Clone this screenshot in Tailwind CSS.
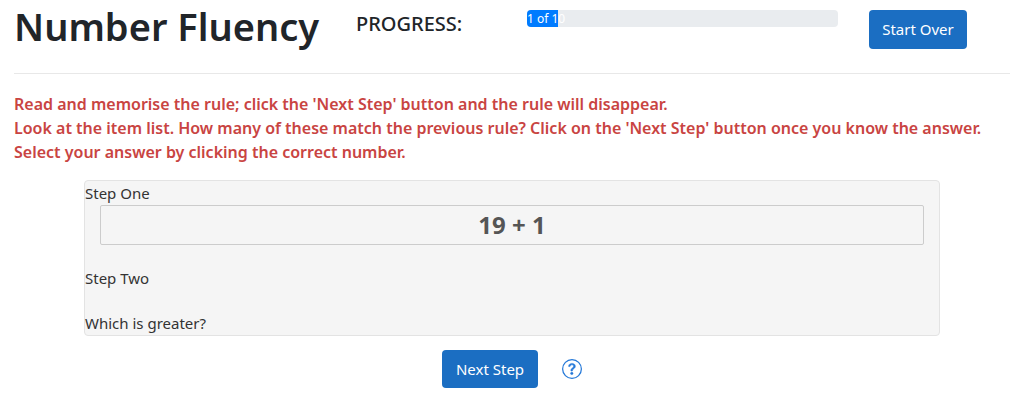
<!DOCTYPE html>
<html lang="en">
<head>
<meta charset="utf-8">
<title>Number Fluency</title>
<script src="https://cdn.jsdelivr.net/npm/@tailwindcss/browser@4"></script>
</head>
<body class="bg-white font-['Noto_Sans',sans-serif] text-base text-[#212529]">
<header class="mx-3.5 flex h-[74px] items-start border-b border-[#e8e8e8]">
  <h1 class="w-[342px] shrink-0 whitespace-nowrap text-[38px] leading-[52px] font-semibold">Number Fluency</h1>
  <h2 id="progress-label" class="w-[171px] shrink-0 pt-2.5 text-xl leading-7 font-medium">PROGRESS:</h2>
  <div role="progressbar" aria-labelledby="progress-label" aria-valuenow="1" aria-valuemin="0" aria-valuemax="10" class="mt-2.5 h-[17px] grow overflow-hidden rounded bg-[#e9ecef]">
    <div class="flex h-full w-1/10 items-center bg-[#007bff] text-xs whitespace-nowrap text-white">1 of 10</div>
  </div>
  <button class="mt-2.5 mr-[43px] ml-[31px] h-[39px] w-[98px] shrink-0 rounded bg-[#1b6ec2] text-[15px] text-white">Start Over</button>
</header>
<main>
  <p class="mx-3.5 mt-[18px] text-base leading-6 font-semibold text-[#c94442]">Read and memorise the rule; click the 'Next Step' button and the rule will disappear.<br>Look at the item list. How many of these match the previous rule? Click on the 'Next Step' button once you know the answer.<br>Select your answer by clicking the correct number.</p>
  <section class="mx-[84px] mt-4 rounded border border-[#e3e3e3] bg-[#f5f5f5] text-[#333]">
    <p class="text-[15px] leading-6">Step One</p>
    <div class="mx-[15px] h-10 rounded-xs border border-[#ccc] text-center text-2xl leading-[38px] font-bold text-[#555]">19 + 1</div>
    <p class="mt-[21px] text-[15px] leading-6">Step Two</p>
    <p class="mt-[21px] text-[15px] leading-6">Which is greater?</p>
  </section>
  <div class="mt-3.5 flex items-center justify-center gap-6">
    <button class="h-[38px] w-24 rounded bg-[#1b6ec2] text-[15px] text-white">Next Step</button>
    <button aria-label="Help" class="text-[#2478d8]"><svg class="size-5" viewBox="0 0 16 16" fill="currentColor"><path d="M8 15A7 7 0 1 1 8 1a7 7 0 0 1 0 14m0 1A8 8 0 1 0 8 0a8 8 0 0 0 0 16"/><path stroke="currentColor" stroke-width=".4" d="M5.255 5.786a.237.237 0 0 0 .241.247h.825c.138 0 .248-.113.266-.25.09-.656.54-1.134 1.342-1.134.686 0 1.314.343 1.314 1.168 0 .635-.374.927-.965 1.371-.673.489-1.206 1.06-1.168 1.987l.003.217a.25.25 0 0 0 .25.246h.811a.25.25 0 0 0 .25-.25v-.105c0-.718.273-.927 1.01-1.486.609-.463 1.244-.977 1.244-2.056 0-1.511-1.276-2.241-2.673-2.241-1.267 0-2.655.59-2.75 2.286m1.557 5.763c0 .533.425.927 1.01.927.609 0 1.028-.394 1.028-.927 0-.552-.42-.94-1.029-.94-.584 0-1.009.388-1.009.94"/></svg></button>
  </div>
</main>
</body>
</html>
